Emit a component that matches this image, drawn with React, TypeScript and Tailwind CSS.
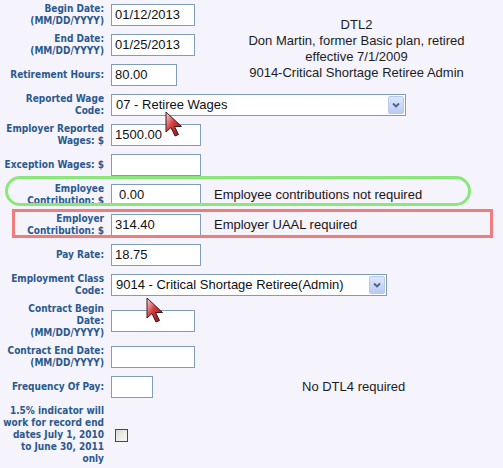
import type { ReactNode } from "react";

const LABEL = "w-[104px] shrink-0 whitespace-nowrap text-right text-[10px] leading-[12px] font-bold text-[#2a5a8e] [font-family:'DejaVu_Sans_Condensed','DejaVu_Sans',sans-serif]";
const INPUT = "h-[22px] border border-[#7f9db9] bg-white pl-[3px] text-[13px] leading-[20px] text-[#111]";

function Row({ label, children, className = "" }: { label: ReactNode; children?: ReactNode; className?: string }) {
  return (
    <div className={`relative flex min-h-[30px] items-center py-[3px] ${className}`}>
      <div className={LABEL}>{label}</div>
      <div className="ml-[7px] flex items-center">{children}</div>
    </div>
  );
}

function Field({ value = "", width }: { value?: string; width: string }) {
  return <div className={`${INPUT} ${width}`}>{value}</div>;
}

function Select({ value, width }: { value: string; width: string }) {
  return (
    <div className={`flex h-[22px] items-center justify-between border border-[#7f9db9] bg-white pl-[4px] pr-[1px] text-[13px] text-[#111] ${width}`}>
      <span>{value}</span>
      <span className="flex h-[18px] w-[16px] items-center justify-center rounded-[2px] border border-[#b8c9f0] bg-gradient-to-b from-[#dde6fb] to-[#b9cbf5]">
        <svg width="8" height="6" viewBox="0 0 8 6">
          <path d="M1 1.5 L4 4.5 L7 1.5" fill="none" stroke="#4d6185" strokeWidth="1.8" />
        </svg>
      </span>
    </div>
  );
}

// mouse pointer drawn over the form in the screenshot
function Cursor({ className }: { className: string }) {
  return (
    <svg className={`pointer-events-none absolute z-20 ${className}`} width="20" height="28" viewBox="0 0 20 28">
      <defs>
        <linearGradient id="cur" x1="0" y1="0" x2="1" y2="1">
          <stop offset="0" stopColor="#f6dcdc" />
          <stop offset="0.45" stopColor="#d63c3c" />
          <stop offset="1" stopColor="#8a0e0e" />
        </linearGradient>
      </defs>
      <path d="M1 1 L1 21 L6 16.5 L10 25 L13.5 23.5 L9.5 15.5 L16.5 15.5 Z" fill="url(#cur)" stroke="#3a1a1a" strokeWidth="1" strokeLinejoin="round" />
    </svg>
  );
}

export default function App() {
  return (
    <div className="relative h-[468px] w-[503px] overflow-hidden bg-[#f5f3fc] [font-family:'Liberation_Sans',Arial,sans-serif]">
      <div className="flex">
        <div className="w-[210px] shrink-0">
          <Row label={<>Begin Date:<br />(MM/DD/YYYY)</>}>
            <Field value="01/12/2013" width="w-[84px]" />
          </Row>
          <Row label={<>End Date:<br />(MM/DD/YYYY)</>}>
            <Field value="01/25/2013" width="w-[84px]" />
          </Row>
          <Row label="Retirement Hours:">
            <Field value="80.00" width="w-[66px]" />
          </Row>
        </div>
        <div className="flex-1 pt-[17px] text-center text-[13px] leading-[16px] text-[#1c1c1c]">
          <div>DTL2</div>
          <div>Don Martin, former Basic plan, retired</div>
          <div>effective 7/1/2009</div>
          <div>9014-Critical Shortage Retiree Admin</div>
        </div>
      </div>

      <Row label={<>Reported Wage<br />Code:</>}>
        <Select value="07 - Retiree Wages" width="w-[295px]" />
        <Cursor className="left-[165px] top-[21px]" />
      </Row>
      <Row label={<>Employer Reported<br />Wages: $</>}>
        <Field value="1500.00" width="w-[90px]" />
      </Row>
      <Row label="Exception Wages: $">
        <Field width="w-[90px]" />
      </Row>
      <Row label={<>Employee<br />Contribution: $</>}>
        <Field value=" 0.00" width="w-[90px] pl-[7px]" />
        <span className="ml-[13px] text-[13px] text-[#1a1414]">Employee contributions not required</span>
        <div className="pointer-events-none absolute left-[5px] top-[-4px] z-10 h-[30px] w-[466px] rounded-full border-[3px] border-[#8ae87a]" />
      </Row>
      <Row label={<>Employer<br />Contribution: $</>}>
        <Field value="314.40" width="w-[90px]" />
        <span className="ml-[13px] text-[13px] text-[#1a1414]">Employer UAAL required</span>
        <div className="pointer-events-none absolute left-[12px] top-[-1px] z-10 h-[29px] w-[481px] border-[3px] border-[#f07c7c]" />
      </Row>
      <Row label="Pay Rate:">
        <Field value="18.75" width="w-[90px]" />
      </Row>
      <Row label={<>Employment Class<br />Code:</>}>
        <Select value="9014 - Critical Shortage Retiree(Admin)" width="w-[276px]" />
        <Cursor className="left-[146px] top-[27px]" />
      </Row>
      <Row label={<>Contract Begin<br />Date:<br />(MM/DD/YYYY)</>}>
        <Field width="w-[84px]" />
      </Row>
      <Row label={<>Contract End Date:<br />(MM/DD/YYYY)</>}>
        <Field width="w-[84px]" />
      </Row>
      <Row label="Frequency Of Pay:">
        <Field width="w-[42px]" />
        <span className="ml-[149px] text-[13px] text-[#1c1c1c]">No DTL4 required</span>
      </Row>
      <Row label={<>1.5% indicator will<br />work for record end<br />dates July 1, 2010<br />to June 30, 2011<br />only</>}>
        <div className="ml-[4px] h-[13px] w-[13px] border border-[#1c5180] bg-gradient-to-br from-[#dcdcd6] to-[#f8f8f6]" />
      </Row>
    </div>
  );
}
